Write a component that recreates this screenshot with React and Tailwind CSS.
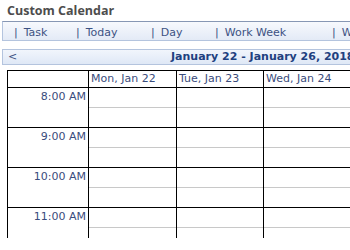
import React from 'react';

const TOOLBAR = [
  { label: 'Task', w: 'w-[62px]' },
  { label: 'Today', w: 'w-[75px]' },
  { label: 'Day', w: 'w-[64px]' },
  { label: 'Work Week', w: 'w-[117px]' },
  { label: 'Week', w: 'w-[80px]' },
];

const DAYS = ['Mon, Jan 22', 'Tue, Jan 23', 'Wed, Jan 24', 'Thu, Jan 25'];
const HOURS = ['8:00 AM', '9:00 AM', '10:00 AM', '11:00 AM', '12:00 PM'];

function HourRow({ label }) {
  return (
    <>
      <div className="h-[40px] border-r border-b border-black text-right pr-[2px] pt-[2px] leading-[14px]">{label}</div>
      {DAYS.map((d) => (
        <div key={d} className="h-[40px] border-r border-b border-black flex flex-col">
          <div className="h-[20px] border-b border-[#c8c8c8]" />
          <div className="flex-1" />
        </div>
      ))}
    </>
  );
}

export default function App() {
  return (
    <div className="w-[350px] h-[250px] overflow-hidden bg-white" style={{ fontFamily: '"DejaVu Sans", Verdana, sans-serif' }}>
      <div className="pl-[7px] pt-[3px] h-[21px] text-[12.5px] font-bold text-[#4d4d4d] leading-[16px]" style={{ fontFamily: '"Open Sans", sans-serif' }}>
        Custom Calendar
      </div>

      <div className="ml-[2px] w-[420px] h-[20px] border border-[#b4c4de] border-t-[#8797b4] bg-gradient-to-b from-[#f7f9fd] to-[#e3eaf6] flex items-center pl-[11px] pt-[4px] text-[11px] text-[#3d5283] whitespace-nowrap">
        {TOOLBAR.map((t) => (
          <div key={t.label} className={`${t.w} shrink-0`}>
            <span className="mr-[6px]">|</span>{t.label}
          </div>
        ))}
      </div>

      <div className="mt-[8px] ml-[2px] w-[420px] h-[16px] border border-[#b4c4de] bg-gradient-to-b from-[#f1f5fc] to-[#dfe8f6] flex items-center pt-[1px] text-[11px] whitespace-nowrap">
        <span className="pl-[5px] text-[#3d5283] w-[168px] shrink-0">&lt;</span>
        <span className="font-bold text-[#21407f]">January 22 - January 26, 2018</span>
      </div>

      <div className="mt-[5px] ml-[7px] h-[168px] overflow-hidden">
        <div className="grid grid-cols-[81px_88px_87px_88px_88px] w-[432px] border-l border-t border-black text-[11px] text-[#3a4c7c]">
          <div className="h-[17px] border-r border-b border-black" />
          {DAYS.map((d) => (
            <div key={d} className="h-[17px] border-r border-b border-black pl-[2px] leading-[16px]">{d}</div>
          ))}
          {HOURS.map((h) => <HourRow key={h} label={h} />)}
        </div>
      </div>
    </div>
  );
}
